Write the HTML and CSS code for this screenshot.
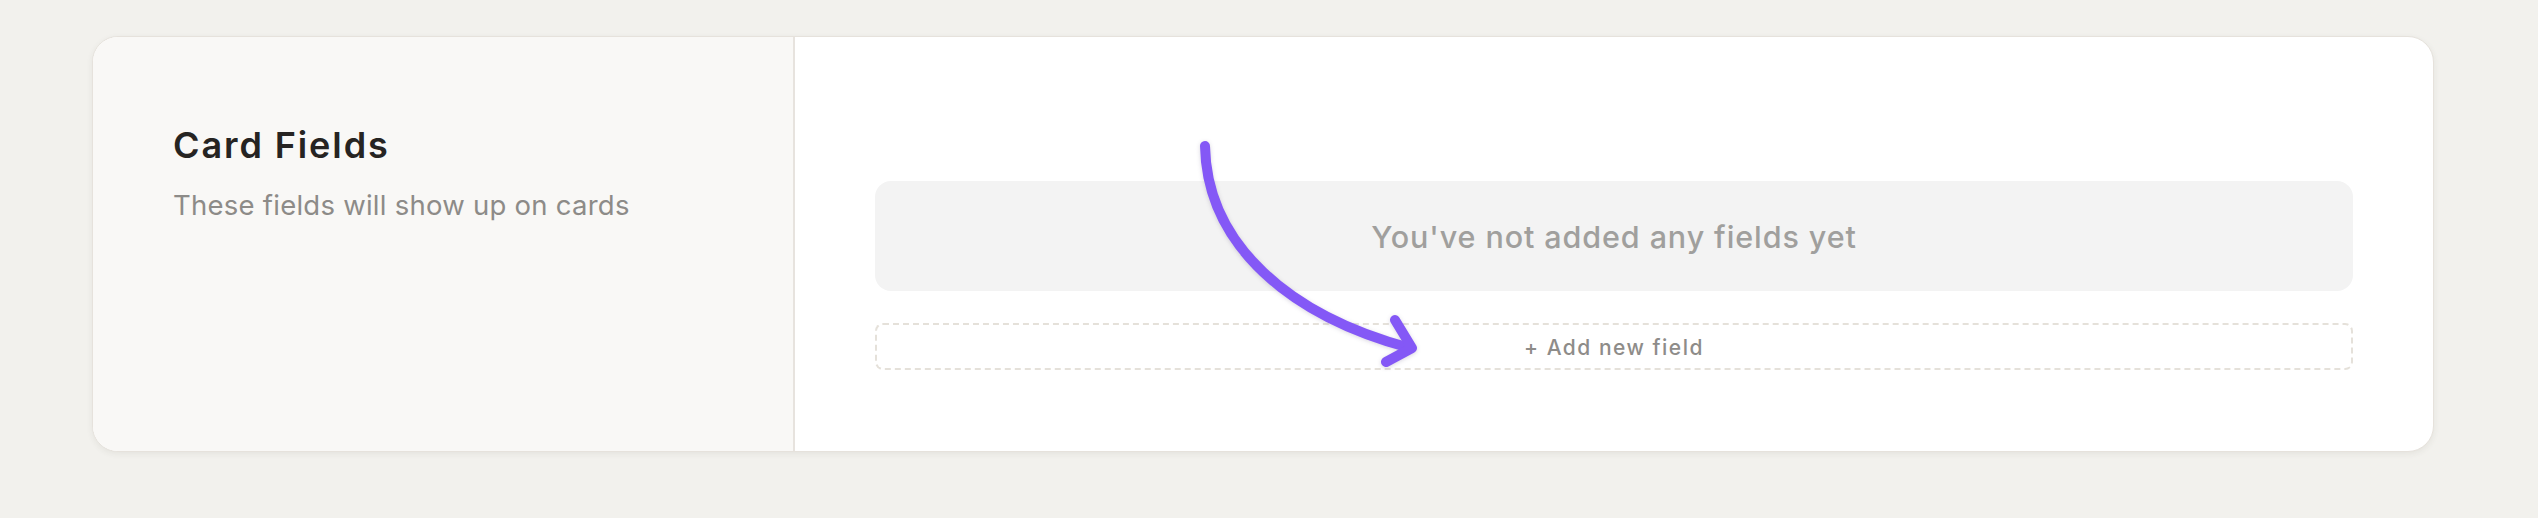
FILE: index.html
```html
<!DOCTYPE html>
<html lang="en">
<head>
<meta charset="utf-8">
<title>Card Fields</title>
<link rel="stylesheet" href="styles.css">
</head>
<body>
<div class="page">
  <section class="card">
    <div class="card-side">
      <h2 class="card-title">Card Fields</h2>
      <p class="card-desc">These fields will show up on cards</p>
    </div>
    <div class="card-main">
      <div class="empty-state">You've not added any fields yet</div>
      <button class="add-field" type="button">+ Add new field</button>
    </div>
  </section>
  <svg class="hint-arrow" width="2538" height="518" viewBox="0 0 2538 518" aria-hidden="true">
    <path d="M1205 146 C1207 245 1290 316 1410 348" fill="none" stroke="#8458f6" stroke-width="10" stroke-linecap="round"/>
    <path d="M1395 320 L1412 348 L1386 362" fill="none" stroke="#8458f6" stroke-width="10" stroke-linecap="round" stroke-linejoin="round"/>
  </svg>
</div>
</body>
</html>
```
FILE: styles.css
```css
* { box-sizing: border-box; }

html, body {
  margin: 0;
  padding: 0;
}

body {
  background: #f2f1ed;
  font-family: Inter, "Noto Sans", "Liberation Sans", sans-serif;
  width: 2538px;
  height: 518px;
  overflow: hidden;
}

.page {
  position: relative;
  padding: 36px 104px 0 92px;
}

.card {
  display: grid;
  grid-template-columns: 702px 1fr;
  height: 416px;
  background: #ffffff;
  border: 1px solid #e6e2dc;
  border-radius: 26px;
  overflow: hidden;
  box-shadow: 0 2px 6px rgba(60, 50, 40, 0.07);
}

.card-side {
  background: #f9f8f6;
  border-right: 2px solid #e7e3de;
  padding: 86px 40px 0 80px;
  display: flex;
  flex-direction: column;
  gap: 20px;
}

.card-title {
  margin: 0;
  font-size: 36px;
  line-height: 44px;
  font-weight: 600;
  color: #262422;
  letter-spacing: 1.9px;
}

.card-desc {
  margin: 0;
  font-size: 27.5px;
  line-height: 36px;
  font-weight: 400;
  color: #8d8b88;
  letter-spacing: 0.25px;
}

.card-main {
  padding: 144px 80px 80px 80px;
  display: flex;
  flex-direction: column;
  gap: 32px;
}

.empty-state {
  height: 110px;
  background: #f3f3f3;
  border-radius: 16px;
  display: flex;
  align-items: center;
  justify-content: center;
  font-size: 30.5px;
  font-weight: 500;
  color: #a09f9d;
  letter-spacing: 0.9px;
}

.add-field {
  height: 47px;
  background: transparent;
  border: 2px dashed #e5e1da;
  border-radius: 8px;
  font-family: inherit;
  font-size: 21px;
  font-weight: 500;
  color: #8e8c89;
  letter-spacing: 1.5px;
  display: flex;
  align-items: center;
  justify-content: center;
  padding: 2px 0 0;
}

.hint-arrow {
  position: absolute;
  left: 0;
  top: 0;
  pointer-events: none;
  filter: drop-shadow(0 1px 2px rgba(40, 20, 80, 0.18));
}
```
